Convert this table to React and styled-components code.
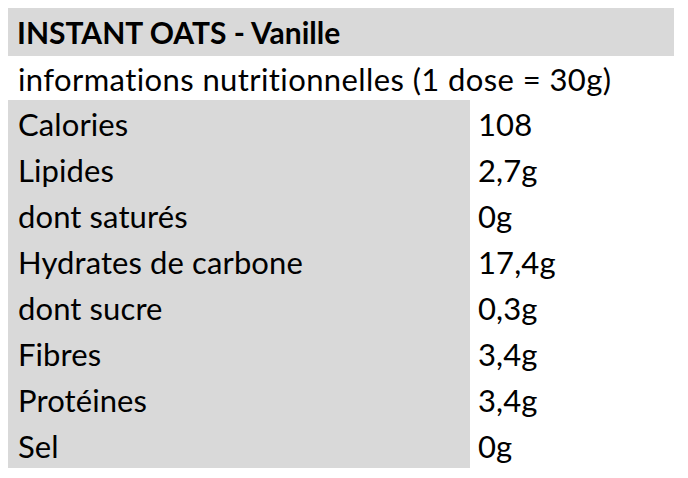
import React from "react";
import styled, { createGlobalStyle } from "styled-components";

const GlobalStyle = createGlobalStyle`
  *, *::before, *::after {
    box-sizing: border-box;
  }
  body {
    margin: 0;
    background: #ffffff;
    font-family: Lato, "Open Sans", sans-serif;
    color: #000000;
  }
`;

const Page = styled.div`
  padding: 8px;
`;

const Table = styled.div`
  width: 666px;
  display: grid;
  grid-template-columns: 462px 204px;
`;

const TitleRow = styled.div`
  grid-column: 1 / span 2;
  height: 48px;
  background: #d9d9d9;
  font-weight: 700;
  font-size: 30px;
  display: flex;
  align-items: center;
  padding-left: 9px;
  letter-spacing: 0;
`;

const SubRow = styled.div`
  grid-column: 1 / span 2;
  height: 44px;
  font-size: 31px;
  display: flex;
  align-items: center;
  padding-left: 10px;
  padding-top: 2px;
  letter-spacing: 0.4px;
`;

const Cell = styled.div`
  height: 46px;
  font-size: 31px;
  display: flex;
  align-items: center;
  padding-top: 2px;
  padding-left: ${(p) => (p.$label ? "10px" : "8px")};
  background: ${(p) => (p.$label ? "#d9d9d9" : "#ffffff")};
  letter-spacing: 0.1px;
`;

const rows = [
  ["Calories", "108"],
  ["Lipides", "2,7g"],
  ["dont saturés", "0g"],
  ["Hydrates de carbone", "17,4g"],
  ["dont sucre", "0,3g"],
  ["Fibres", "3,4g"],
  ["Protéines", "3,4g"],
  ["Sel", "0g"],
];

const App = () => {
  return (
    <Page>
      <GlobalStyle />
      <Table>
        <TitleRow>INSTANT OATS - Vanille</TitleRow>
        <SubRow>informations nutritionnelles (1 dose = 30g)</SubRow>
        {rows.map(([label, value]) => (
          <React.Fragment key={label}>
            <Cell $label>{label}</Cell>
            <Cell>{value}</Cell>
          </React.Fragment>
        ))}
      </Table>
    </Page>
  );
};

export default App;
